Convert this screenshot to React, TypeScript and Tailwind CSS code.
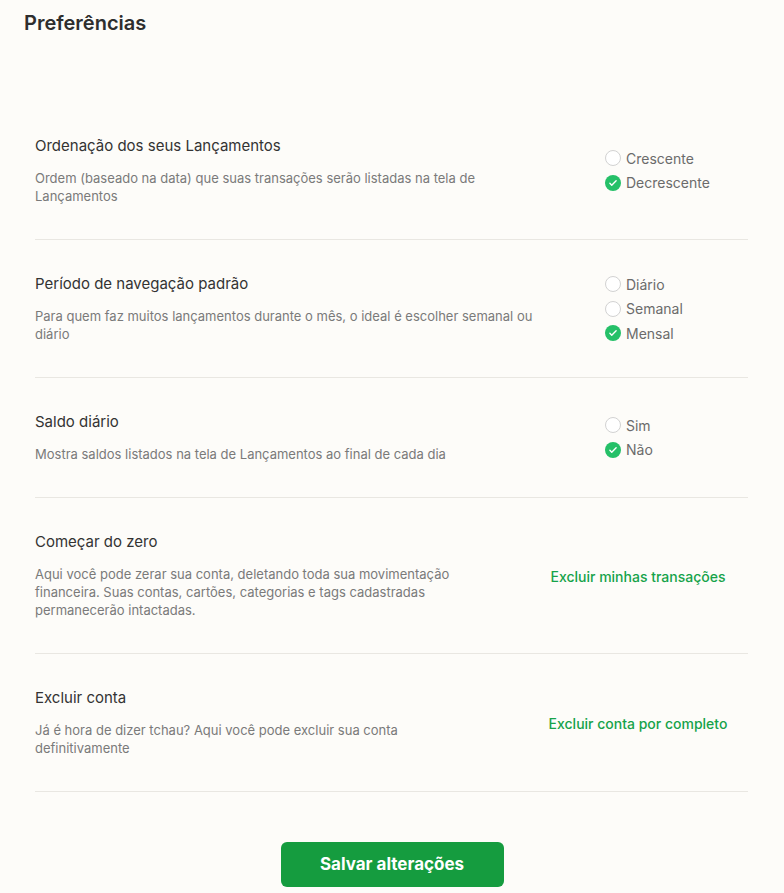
import { useState } from "react";

type Option = { value: string; label: string };

function Radio({ checked }: { checked: boolean }) {
  if (checked) {
    return (
      <span className="flex h-4 w-4 items-center justify-center rounded-full bg-[#25c068]">
        <svg viewBox="0 0 16 16" className="h-[10px] w-[10px]" fill="none">
          <path d="M3 8.5l3 3 7-7" stroke="#fff" strokeWidth="2.2" strokeLinecap="round" strokeLinejoin="round" />
        </svg>
      </span>
    );
  }
  return <span className="h-4 w-4 rounded-full border-[1.5px] border-[#d2d2d2] bg-white" />;
}

function RadioGroup({ options, value, onChange }: { options: Option[]; value: string; onChange: (v: string) => void }) {
  return (
    <div className="flex flex-col gap-[4.5px] pl-[60px]">
      {options.map((o) => (
        <button key={o.value} onClick={() => onChange(o.value)} className="flex h-5 items-center gap-[5px] text-left">
          <Radio checked={value === o.value} />
          <span className="text-[14px] text-[#6b6b6b]">{o.label}</span>
        </button>
      ))}
    </div>
  );
}

function Section({
  title,
  description,
  descWidth,
  children,
}: {
  title: string;
  description: string;
  descWidth: string;
  children: React.ReactNode;
}) {
  return (
    <div className="flex items-center border-b border-[#e9e7e2] py-[34px]">
      <div className="w-[510px] shrink-0">
        <h3 className="text-[15px] leading-5 text-[#333]">{title}</h3>
        <p className={`mt-[13px] text-[13px] leading-[18px] text-[#7a7a7a] ${descWidth}`}>{description}</p>
      </div>
      <div className="flex-1">{children}</div>
    </div>
  );
}

export default function App() {
  const [order, setOrder] = useState("desc");
  const [period, setPeriod] = useState("mensal");
  const [balance, setBalance] = useState("nao");

  return (
    <div className="min-h-[893px] bg-[#fdfcf9]" style={{ fontFamily: "Inter, 'Noto Sans', sans-serif" }}>
      <div className="px-6 pt-[9px]">
        <h1 className="text-[20px] leading-7 font-semibold text-[#2e2e2e]">Preferências</h1>
      </div>

      <div className="mt-[65px] pl-[35px] pr-[36px]">
        <Section
          title="Ordenação dos seus Lançamentos"
          description="Ordem (baseado na data) que suas transações serão listadas na tela de Lançamentos"
          descWidth="max-w-[510px]"
        >
          <RadioGroup
            value={order}
            onChange={setOrder}
            options={[
              { value: "asc", label: "Crescente" },
              { value: "desc", label: "Decrescente" },
            ]}
          />
        </Section>

        <Section
          title="Período de navegação padrão"
          description="Para quem faz muitos lançamentos durante o mês, o ideal é escolher semanal ou diário"
          descWidth="max-w-[510px]"
        >
          <RadioGroup
            value={period}
            onChange={setPeriod}
            options={[
              { value: "diario", label: "Diário" },
              { value: "semanal", label: "Semanal" },
              { value: "mensal", label: "Mensal" },
            ]}
          />
        </Section>

        <Section
          title="Saldo diário"
          description="Mostra saldos listados na tela de Lançamentos ao final de cada dia"
          descWidth="max-w-[510px]"
        >
          <RadioGroup
            value={balance}
            onChange={setBalance}
            options={[
              { value: "sim", label: "Sim" },
              { value: "nao", label: "Não" },
            ]}
          />
        </Section>

        <Section
          title="Começar do zero"
          description="Aqui você pode zerar sua conta, deletando toda sua movimentação financeira. Suas contas, cartões, categorias e tags cadastradas permanecerão intactadas."
          descWidth="max-w-[460px]"
        >
          <button className="w-full pr-[17px] text-center text-[14px] font-medium text-[#16a34a]">Excluir minhas transações</button>
        </Section>

        <Section
          title="Excluir conta"
          description="Já é hora de dizer tchau? Aqui você pode excluir sua conta definitivamente"
          descWidth="max-w-[440px]"
        >
          <button className="w-full pr-[17px] text-center text-[14px] font-medium text-[#16a34a]">Excluir conta por completo</button>
        </Section>
      </div>

      <div className="flex justify-center pt-[50px]">
        <button className="h-[45px] w-[223px] rounded-md bg-[#159c3f] text-[17px] font-bold text-white">
          Salvar alterações
        </button>
      </div>
    </div>
  );
}
